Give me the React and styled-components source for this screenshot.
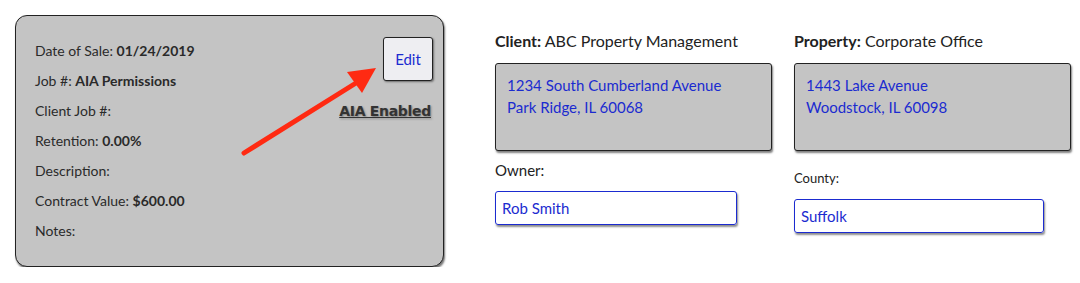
import React from 'react';
import styled, { createGlobalStyle } from 'styled-components';

const GlobalStyle = createGlobalStyle`
  body {
    margin: 0;
    background: #fff;
    font-family: Lato, "Open Sans", sans-serif;
    color: #222;
  }
`;

const Page = styled.div`
  display: flex;
  align-items: flex-start;
  padding: 15px 0 0 15px;
`;

const Card = styled.div`
  position: relative;
  box-sizing: border-box;
  width: 429px;
  height: 252px;
  background: #c4c4c4;
  border: 1px solid #222;
  border-radius: 12px;
  box-shadow: 1px 2px 2px rgba(0, 0, 0, 0.55);
  padding: 25px 20px 0 19px;
  display: flex;
  justify-content: space-between;
`;

const InfoList = styled.div`
  display: flex;
  flex-direction: column;
`;

const InfoRow = styled.div`
  height: 30px;
  line-height: 20px;
  font-size: 14px;
  color: #2a2a2a;
`;

const Strong = styled.b`
  font-weight: 700;
`;

const Side = styled.div`
  display: flex;
  flex-direction: column;
  align-items: flex-end;
  margin-top: -4px;
  margin-right: -10px;
`;

const EditButton = styled.button`
  box-sizing: border-box;
  width: 50px;
  height: 44px;
  background: #eeeef2;
  border: 1px solid #222;
  border-radius: 3px;
  box-shadow: 1px 1px 2px rgba(0, 0, 0, 0.45);
  color: #1b2bd0;
  font-family: Lato, sans-serif;
  font-size: 15px;
  padding: 0;
  cursor: pointer;
`;

const AiaLink = styled.a`
  margin-top: 22px;
  margin-right: 2px;
  font-family: "DejaVu Sans", Verdana, sans-serif;
  font-weight: 700;
  font-size: 14px;
  color: #333;
  text-decoration: underline;
  text-shadow: 1px 1px 2px rgba(0, 0, 0, 0.35);
  letter-spacing: -0.3px;
`;

const Arrow = styled.svg`
  position: absolute;
  left: 0;
  top: 0;
  pointer-events: none;
`;

const Details = styled.div`
  display: flex;
  gap: 22px;
  margin-left: 51px;
  padding-top: 16px;
`;

const Column = styled.div`
  display: flex;
  flex-direction: column;
  width: ${p => p.$width}px;
`;

const Heading = styled.div`
  font-size: 16px;
  line-height: 20px;
  color: #222;
  margin-bottom: 12px;
`;

const AddressBox = styled.div`
  box-sizing: border-box;
  height: 88px;
  background: #c4c4c4;
  border: 1px solid #222;
  border-radius: 3px;
  box-shadow: 1px 2px 2px rgba(0, 0, 0, 0.5);
  padding: 10px 11px;
  color: #1b2bd0;
  font-size: 15px;
  line-height: 22px;
`;

const FieldLabel = styled.div`
  font-size: ${p => p.$size}px;
  line-height: 20px;
  color: #222;
  margin-top: ${p => p.$top}px;
  margin-bottom: 11px;
`;

const FieldBox = styled.div`
  box-sizing: border-box;
  width: ${p => p.$width}px;
  height: 34px;
  border: 1px solid #1b2bd0;
  border-radius: 3px;
  box-shadow: 1px 2px 2px rgba(0, 0, 0, 0.45);
  padding: 0 6px;
  display: flex;
  align-items: center;
  color: #1b2bd0;
  font-size: 15px;
`;

export default function App() {
  return (
    <>
      <GlobalStyle />
      <Page>
        <Card>
          <InfoList>
            <InfoRow>Date of Sale: <Strong>01/24/2019</Strong></InfoRow>
            <InfoRow>Job #: <Strong>AIA Permissions</Strong></InfoRow>
            <InfoRow>Client Job #:</InfoRow>
            <InfoRow>Retention: <Strong>0.00%</Strong></InfoRow>
            <InfoRow>Description:</InfoRow>
            <InfoRow>Contract Value: <Strong>$600.00</Strong></InfoRow>
            <InfoRow>Notes:</InfoRow>
          </InfoList>
          <Side>
            <EditButton>Edit</EditButton>
            <AiaLink>AIA Enabled</AiaLink>
          </Side>
          <Arrow width="429" height="252" viewBox="0 0 429 252">
            <line x1="228" y1="137" x2="340" y2="67" stroke="#ff2a12" strokeWidth="5" strokeLinecap="round" />
            <polygon points="360,52 331,56 346,77" fill="#ff2a12" />
          </Arrow>
        </Card>
        <Details>
          <Column $width={277}>
            <Heading><Strong>Client:</Strong> ABC Property Management</Heading>
            <AddressBox>
              1234 South Cumberland Avenue<br />
              Park Ridge, IL 60068
            </AddressBox>
            <FieldLabel $size={15} $top={9}>Owner:</FieldLabel>
            <FieldBox $width={242}>Rob Smith</FieldBox>
          </Column>
          <Column $width={277}>
            <Heading><Strong>Property:</Strong> Corporate Office</Heading>
            <AddressBox>
              1443 Lake Avenue<br />
              Woodstock, IL 60098
            </AddressBox>
            <FieldLabel $size={13} $top={17}>County:</FieldLabel>
            <FieldBox $width={250}>Suffolk</FieldBox>
          </Column>
        </Details>
      </Page>
    </>
  );
}
